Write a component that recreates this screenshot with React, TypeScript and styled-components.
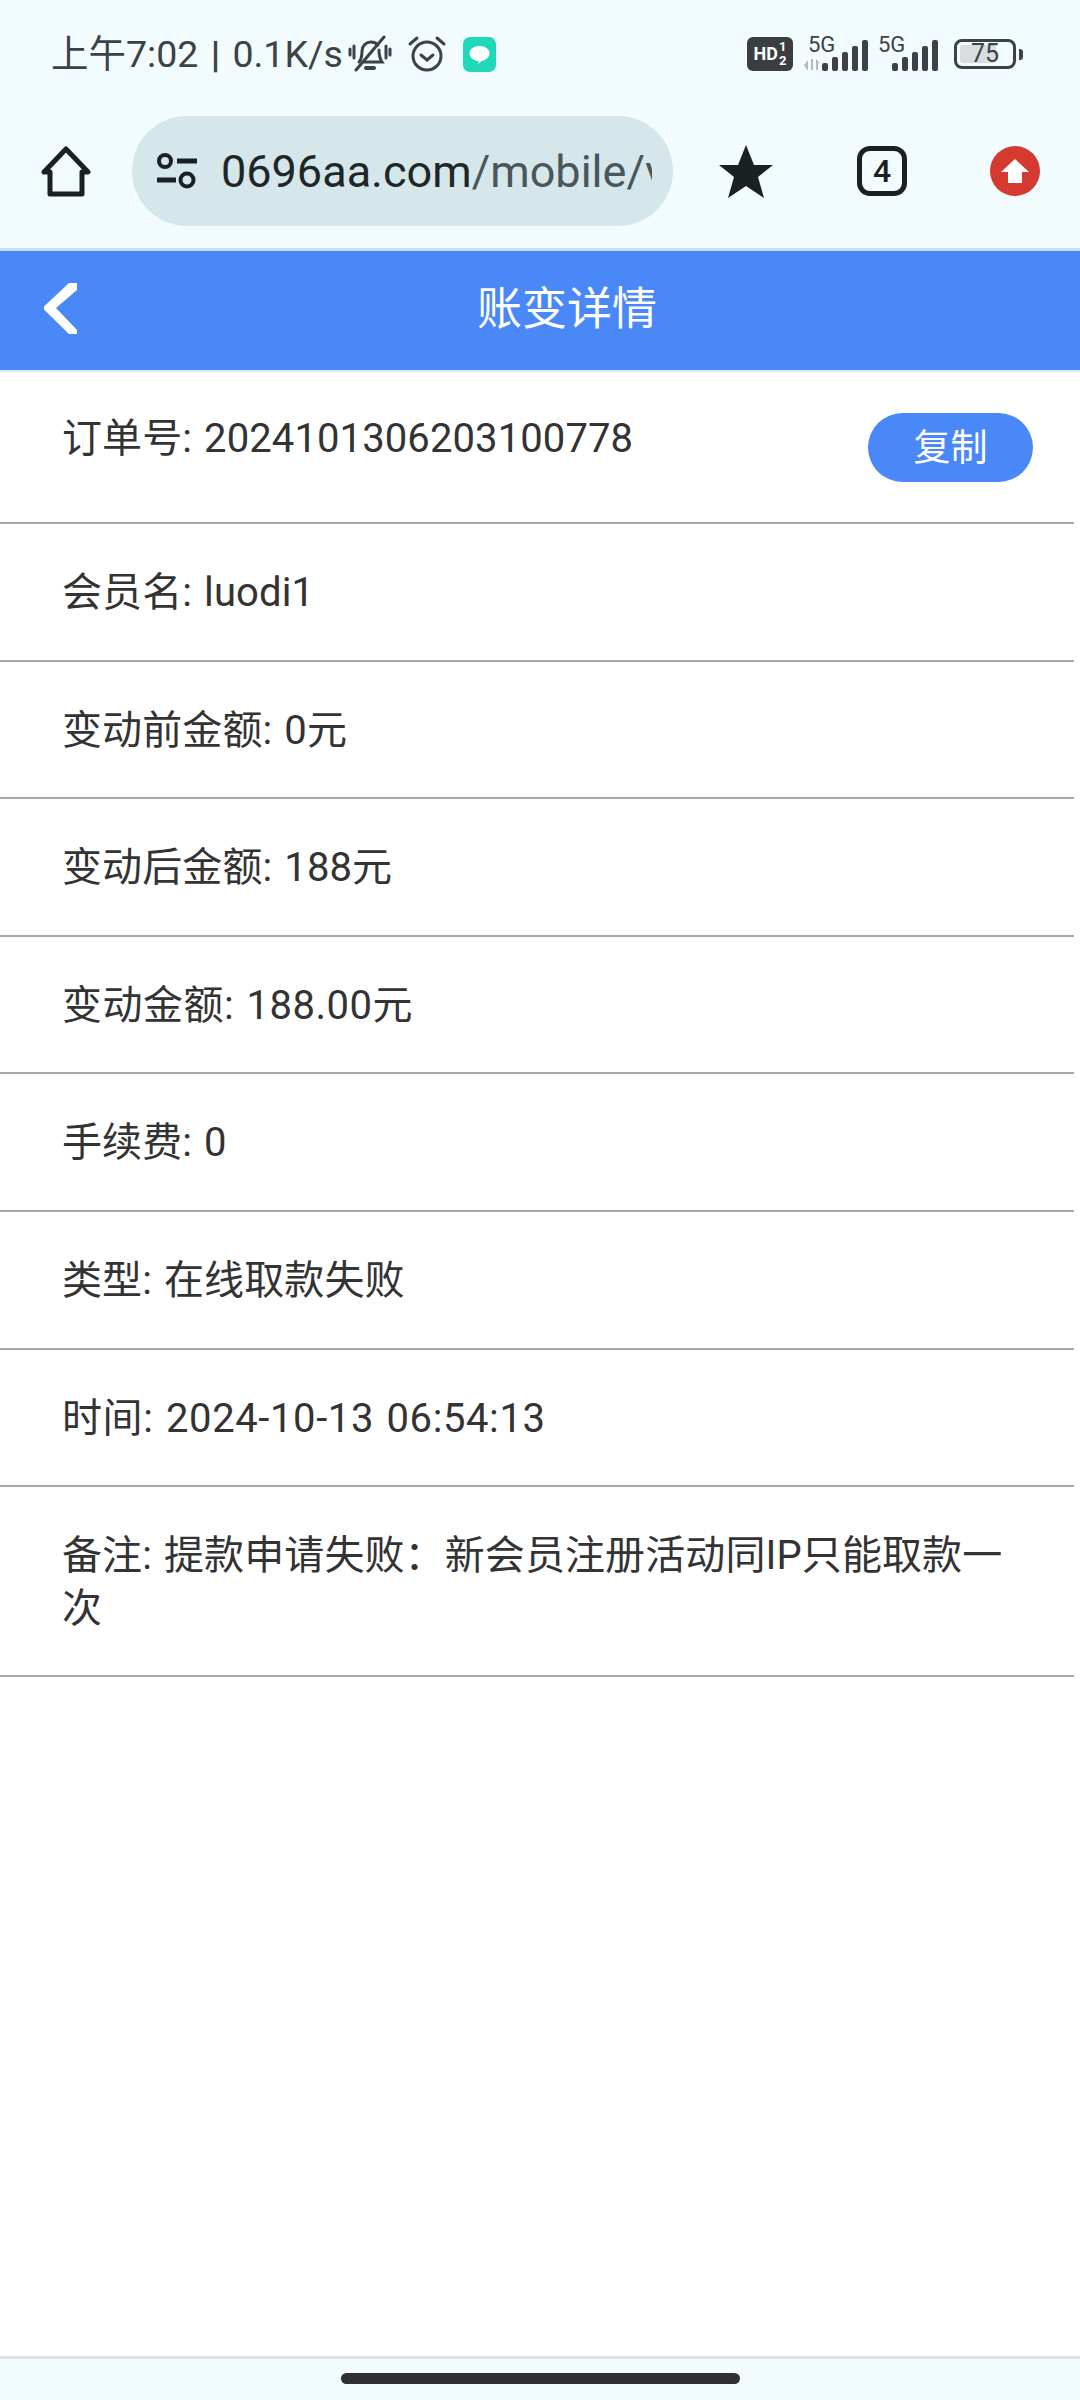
import React from 'react'
import styled, { createGlobalStyle } from 'styled-components'

const GlobalStyle = createGlobalStyle`
  html, body {
    margin: 0;
    padding: 0;
    background: #fff;
    font-family: Roboto, "Noto Sans CJK SC", sans-serif;
  }
  * { box-sizing: border-box; }
`

const Page = styled.div`
  width: 1080px;
  height: 2400px;
  display: flex;
  flex-direction: column;
  background: #fff;
  overflow: hidden;
`

const Chrome = styled.div`
  background: #f2fcff;
  border-bottom: 3px solid #cfe0ea;
  height: 251px;
  flex: none;
`

const StatusBar = styled.div`
  height: 116px;
  padding: 0 57px 8px 51px;
  display: flex;
  align-items: center;
  justify-content: space-between;
  color: #3c4245;
`

const StatusLeft = styled.div`
  display: flex;
  align-items: center;
`

const StatusRight = styled.div`
  display: flex;
  align-items: center;
`

const Clock = styled.span`
  font-size: 37.5px;
  word-spacing: 3px;
  white-space: nowrap;
  line-height: 44px;
`

const Pipe = styled.span`
  font-weight: 700;
`

const HdBadge = styled.div`
  width: 46px;
  height: 34px;
  border-radius: 6px;
  background: #3a3e40;
  color: #fff;
  font-weight: 700;
  display: flex;
  align-items: center;
  justify-content: center;
  font-size: 18px;
  line-height: 1;
`

const Fraction = styled.span`
  display: flex;
  flex-direction: column;
  font-size: 13px;
  line-height: 14px;
  margin-left: 1px;
`

const SignalGroup = styled.div<{ $gap: number }>`
  position: relative;
  width: 66px;
  height: 34px;
  margin-left: ${(p) => p.$gap}px;
`

const FiveG = styled.span`
  position: absolute;
  left: 4px;
  top: -2px;
  font-size: 22px;
  line-height: 20px;
  color: #3c4245;
`

const Battery = styled.div`
  margin-left: 14px;
  display: flex;
  align-items: center;
  gap: 3px;
`

const BatteryBody = styled.div`
  position: relative;
  width: 62px;
  height: 30px;
  border: 3px solid #3c4245;
  border-radius: 8px;
  padding: 3px;
`

const BatteryFill = styled.div`
  width: 36px;
  height: 100%;
  background: #d8dde0;
  border-radius: 3px;
`

const BatteryText = styled.span`
  position: absolute;
  left: 14px;
  top: 0;
  font-size: 25px;
  line-height: 24px;
  color: #3c4245;
`

const BatteryNub = styled.div`
  width: 4px;
  height: 11px;
  background: #3c4245;
  border-radius: 0 3px 3px 0;
`

const Toolbar = styled.div`
  height: 110px;
  display: flex;
  align-items: center;
  padding-left: 41px;
`

const UrlPill = styled.div`
  width: 541px;
  height: 110px;
  margin-left: 41px;
  margin-right: 46px;
  padding-left: 24px;
  padding-right: 21px;
  border-radius: 55px;
  background: #d5e7ea;
  display: flex;
  align-items: center;
`

const UrlClip = styled.div`
  flex: 1;
  overflow: hidden;
  white-space: nowrap;
  margin-left: 23px;
  font-size: 45px;
  color: #4a565a;
`

const UrlHost = styled.span`
  color: #1f2628;
`

const ToolIcons = styled.div`
  display: flex;
  align-items: center;
`

const TabCount = styled.div`
  width: 50px;
  height: 50px;
  margin-left: 84px;
  margin-right: 83px;
  border: 5px solid #1b2123;
  border-radius: 13px;
  display: flex;
  align-items: center;
  justify-content: center;
  font-size: 32px;
  font-weight: 500;
  color: #1b2123;
`

const Header = styled.div`
  height: 119px;
  flex: none;
  background: #4a87f7;
  display: flex;
  align-items: center;
  padding: 0 26px 0 44px;
`

const BackIcon = styled.svg`
  width: 36px;
  height: 51px;
  margin-bottom: 4px;
  flex: none;
`

const Title = styled.div`
  flex: 1;
  text-align: center;
  color: #fff;
  font-size: 45px;
  margin-bottom: 10px;
`

const List = styled.div`
  flex: 1;
  border-top: 2px solid #dfe8fb;
`

const Row = styled.div<{ $tracking?: number }>`
  width: 1074px;
  padding: 43px 41px 40px 62px;
  border-bottom: 2px solid #a8a8a8;
  display: flex;
  align-items: flex-start;
  justify-content: space-between;
  font-size: 40px;
  line-height: 52.6px;
  word-spacing: 2px;
  letter-spacing: ${(p) => p.$tracking ?? 0.1}px;
  color: #333;
`

const OrderRow = styled(Row)`
  padding-top: 41px;
  padding-bottom: 40px;
`

const CopyButton = styled.div`
  flex: none;
  width: 165px;
  height: 69px;
  border-radius: 35px;
  background: #4a87f7;
  color: #fff;
  font-size: 37px;
  line-height: 72px;
  text-align: center;
`

const BottomBar = styled.div`
  height: 44px;
  flex: none;
  background: #f2fcff;
  border-top: 3px solid #d8e3e7;
  display: flex;
  justify-content: center;
  padding-top: 14px;
`

const HomeHandle = styled.div`
  width: 399px;
  height: 11px;
  border-radius: 6px;
  background: #2e3032;
`

const rows = [
  { text: '会员名: luodi1' },
  { text: '变动前金额: 0元' },
  { text: '变动后金额: 188元' },
  { text: '变动金额: 188.00元', tracking: 0.5 },
  { text: '手续费: 0' },
  { text: '类型: 在线取款失败' },
  { text: '时间: 2024-10-13 06:54:13', tracking: 0.6 },
  { text: '备注: 提款申请失败：新会员注册活动同IP只能取款一次' },
]

const Bars = () => (
  <svg width="48" height="31" viewBox="0 0 48 31" fill="#3c4245" style={{ position: 'absolute', right: 0, bottom: 0 }}>
    <rect x="0" y="23" width="6" height="8" rx="2" />
    <rect x="10" y="17" width="6" height="14" rx="2" />
    <rect x="20" y="12" width="6" height="19" rx="2" />
    <rect x="30" y="6" width="6" height="25" rx="2" />
    <rect x="40" y="0" width="6" height="31" rx="2" />
  </svg>
)

const App: React.FC = () => {
  return (
    <Page>
      <GlobalStyle />
      <Chrome>
        <StatusBar>
          <StatusLeft>
            <Clock>
              上午7:02 <Pipe>|</Pipe> 0.1K/s
            </Clock>
            <svg width="44" height="38" viewBox="0 0 44 38" fill="none" stroke="#3c4245" strokeWidth="3" strokeLinecap="round" style={{ marginLeft: 5 }}>
              <path d="M11 27c3-3 3-7 3-11 0-5 4-9 9-9 3 0 5 1 7 3M31 15c0 5 1 9 3 12H15" />
              <path d="M18 33h8" strokeWidth="4" />
              <path d="M36 2L8 35" />
              <path d="M2 14v6M6 11v12M38 11v12M42 14v6" />
            </svg>
            <svg width="40" height="38" viewBox="0 0 40 38" fill="none" stroke="#3c4245" strokeWidth="3" strokeLinecap="round" style={{ marginLeft: 15 }}>
              <circle cx="20" cy="21" r="14" />
              <path d="M14 20l6 5 6-5" />
              <path d="M3 9l7-6M37 9l-7-6" />
            </svg>
            <svg width="33" height="35" viewBox="0 0 33 35" style={{ marginLeft: 16 }}>
              <rect width="33" height="35" rx="7" fill="#1fd8b8" />
              <path d="M16.5 9c6 0 10 3.200 10 7.500 0 4-4 7-8 7.500l-3 3v-3c-5-.5-9-3.500-9-7.500C6.500 12.200 10.500 9 16.500 9z" fill="#fff" />
            </svg>
          </StatusLeft>
          <StatusRight>
            <HdBadge>
              HD
              <Fraction>
                <span>1</span>
                <span>2</span>
              </Fraction>
            </HdBadge>
            <SignalGroup $gap={11}>
              <FiveG>5G</FiveG>
              <svg width="19" height="11" viewBox="0 0 19 11" fill="#b4babd" style={{ position: 'absolute', left: 0, bottom: 1 }}>
                <path d="M0 6l4-5v10H3zM7 0h2v11H7zM12 0l4 4h-2v7h-2z" />
              </svg>
              <Bars />
            </SignalGroup>
            <SignalGroup $gap={4}>
              <FiveG>5G</FiveG>
              <Bars />
            </SignalGroup>
            <Battery>
              <BatteryBody>
                <BatteryFill />
                <BatteryText>75</BatteryText>
              </BatteryBody>
              <BatteryNub />
            </Battery>
          </StatusRight>
        </StatusBar>
        <Toolbar>
          <svg width="50" height="51" viewBox="0 0 50 51" fill="none" stroke="#1b2123" strokeWidth="5" strokeLinejoin="round" strokeLinecap="round">
            <path d="M3 26L25 3l22 23h-6v22H9V26z" />
          </svg>
          <UrlPill>
            <svg width="42" height="36" viewBox="0 0 42 36" fill="none" stroke="#1b2123" strokeWidth="4">
              <circle cx="9" cy="8" r="6" />
              <circle cx="31" cy="27" r="6.500" />
              <path d="M21 8h20M1 27h19" strokeWidth="5" />
            </svg>
            <UrlClip>
              <UrlHost>0696aa.com</UrlHost>/mobile/v
            </UrlClip>
          </UrlPill>
          <ToolIcons>
            <svg width="54" height="53" viewBox="0 0 54 53" fill="#1b2123">
              <path d="M27 0l8 20h19L39 32l6 21-18-12L9 53l6-21L0 20h19z" />
            </svg>
            <TabCount>4</TabCount>
            <svg width="50" height="50" viewBox="0 0 50 50">
              <circle cx="25" cy="25" r="25" fill="#d43a2f" />
              <path d="M25 13l14 13h-7v11H18V26h-7z" fill="#fff" />
            </svg>
          </ToolIcons>
        </Toolbar>
      </Chrome>
      <Header>
        <BackIcon viewBox="0 0 36 51" fill="#fff">
          <path d="M25 0h8v7L12 25l21 22v4h-8L1 27.500a3 3 0 0 1 0-5z" />
        </BackIcon>
        <Title>账变详情</Title>
      </Header>
      <List>
        <OrderRow>
          <span>订单号: 2024101306203100778</span>
          <CopyButton>复制</CopyButton>
        </OrderRow>
        {rows.map((row) => (
          <Row key={row.text} $tracking={row.tracking}>
            <span>{row.text}</span>
          </Row>
        ))}
      </List>
      <BottomBar>
        <HomeHandle />
      </BottomBar>
    </Page>
  )
}

export default App
